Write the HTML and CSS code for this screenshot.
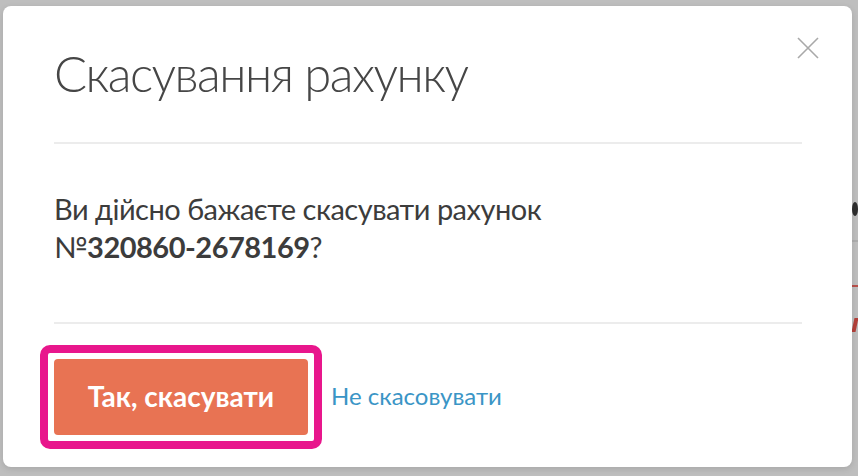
FILE: index.html
```html
<!DOCTYPE html>
<html>

	<head>
		<meta charset="utf-8">
		<title>Скасування рахунку</title>
		<link rel="stylesheet" href="styles.css">
	</head>

	<body>
		<div class="page-edge">
			<span class="edge-dot"></span>
			<span class="edge-line"></span>
			<span class="edge-red"></span>
			<span class="edge-mark"></span>
		</div>
		<div class="modal">
			<a class="close" href="#">
				<svg width="22" height="22" viewBox="0 0 22 22">
					<path d="M1 1 L21 21 M21 1 L1 21" stroke="#a9a9a9" stroke-width="1.6" fill="none"/>
				</svg>
			</a>
			<div class="modal-head">
				<h1>Скасування рахунку</h1>
			</div>
			<div class="modal-body">
				<p>Ви дійсно бажаєте скасувати рахунок<br>№<b>320860-2678169</b>?</p>
			</div>
			<div class="modal-foot">
				<span class="focus-ring">
					<a class="btn" href="#">Так, скасувати</a>
				</span>
				<a class="link" href="#">Не скасовувати</a>
			</div>
		</div>
	</body>

</html>
```

FILE: styles.css
```css
html, body {
	margin: 0;
	padding: 0;
}
body {
	width: 858px;
	height: 476px;
	overflow: hidden;
	background: #bebebe;
	font-family: Lato, "Noto Sans", sans-serif;
	position: relative;
}
/* page behind the backdrop, only its right edge shows */
.page-edge span {
	position: absolute;
}
.edge-dot {
	left: 852px;
	top: 202px;
	width: 6px;
	height: 14px;
	border-radius: 50%;
	background: #2e2e2e;
}
.edge-line {
	left: 852px;
	top: 240px;
	width: 6px;
	height: 2px;
	background: #adadad;
}
.edge-red {
	left: 852px;
	top: 285px;
	width: 6px;
	height: 2px;
	background: #b9504a;
}
.edge-mark {
	left: 853px;
	top: 318px;
	width: 4px;
	height: 14px;
	background: #b3403a;
	transform: skewX(-12deg);
}
.modal {
	position: relative;
	margin: 6px 0 0 3px;
	width: 849px;
	height: 461px;
	box-sizing: border-box;
	padding: 0 50px 0 51px;
	background: #fff;
	border-radius: 8px;
	box-shadow: 0 2px 6px rgba(0, 0, 0, 0.12);
}
.close {
	position: absolute;
	top: 31px;
	right: 33px;
	width: 22px;
	height: 22px;
	display: block;
}
.close svg {
	display: block;
}
.modal-head {
	height: 138px;
	box-sizing: border-box;
	padding-top: 38px;
	border-bottom: 2px solid #ececec;
}
h1 {
	margin: 0;
	font-size: 49px;
	font-weight: 300;
	line-height: 1.2;
	letter-spacing: -1.5px;
	color: #464646;
}
.modal-body {
	height: 180px;
	box-sizing: border-box;
	padding-top: 46px;
	border-bottom: 2px solid #ececec;
}
.modal-body p {
	margin: 0;
	font-size: 29px;
	line-height: 38px;
	letter-spacing: -0.5px;
	color: #3c3c3c;
}
.modal-body b {
	font-weight: bold;
}
.modal-foot {
	display: flex;
	align-items: center;
	gap: 9px;
	padding-top: 21px;
	margin-left: -14px;
}
.focus-ring {
	display: block;
	padding: 6px;
	border: 8px solid #e8168c;
	border-radius: 10px;
}
.btn {
	display: flex;
	align-items: center;
	justify-content: center;
	width: 254px;
	height: 76px;
	box-sizing: border-box;
	padding-bottom: 3px;
	background: #e87353;
	border-radius: 4px;
	color: #fff;
	font-size: 28px;
	font-weight: bold;
	text-decoration: none;
}
.link {
	margin-bottom: 4px;
	color: #3a95c6;
	font-size: 24px;
	text-decoration: none;
}
```
